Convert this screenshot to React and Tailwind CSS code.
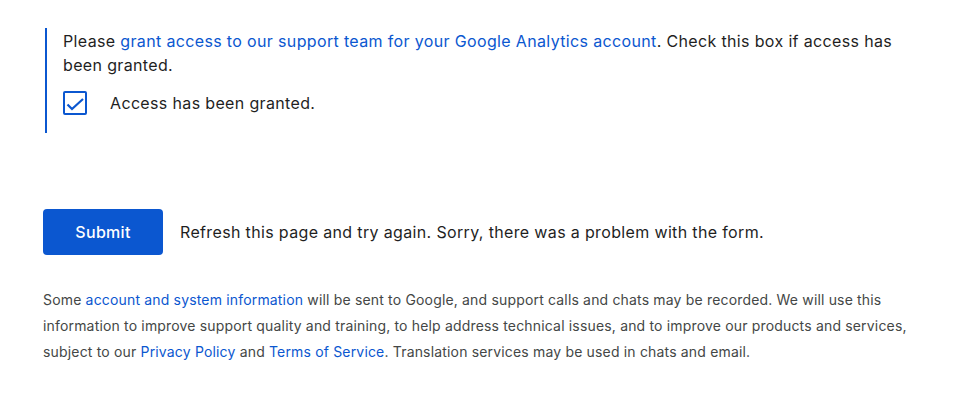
import React from "react";

export default function App() {
  const font = { fontFamily: "Inter, 'Noto Sans', sans-serif" };
  return (
    <div className="w-[974px] h-[407px] bg-white text-[#1f1f1f] px-[43px] pt-[28px]" style={font}>
      <div className="ml-[2px] border-l-2 border-[#0b57d0] pl-[16px] pt-[1px] pb-[18px] pr-[20px]">
        <p className="text-[16px] leading-[24px] tracking-[0.35px]">
          Please{" "}
          <a className="text-[#0b57d0]">grant access to our support team for your Google Analytics account</a>. Check this box if access has been granted.
        </p>
        <label className="mt-[14px] flex items-center h-[24px]">
          <span className="w-[24px] h-[24px] border-2 border-[#0b57d0] rounded-[2px] flex items-center justify-center">
            <svg width="20" height="20" viewBox="0 0 20 20" fill="none" stroke="#0b57d0" strokeWidth="2.2" strokeLinecap="butt" strokeLinejoin="miter">
              <path d="M2.5 11.5 L7 16 L18 6" />
            </svg>
          </span>
          <span className="ml-[23px] text-[16px] leading-[24px] tracking-[0.35px]">Access has been granted.</span>
        </label>
      </div>
      <div className="mt-[76px] flex items-center">
        <button className="w-[120px] h-[46px] rounded-[4px] bg-[#0b57d0] text-white text-[16px] font-medium tracking-[0.3px]">Submit</button>
        <span className="ml-[17px] text-[16px] tracking-[0.35px]">Refresh this page and try again. Sorry, there was a problem with the form.</span>
      </div>
      <p className="mt-[32px] text-[14px] leading-[26px] text-[#444746] tracking-[0.17px]">
        Some <a className="text-[#0b57d0]">account and system information</a> will be sent to Google, and support calls and chats may be recorded. We will use this information to improve support quality and training, to help address technical issues, and to improve our products and services, subject to our <a className="text-[#0b57d0]">Privacy Policy</a> and <a className="text-[#0b57d0]">Terms of Service</a>. Translation services may be used in chats and email.
      </p>
    </div>
  );
}
